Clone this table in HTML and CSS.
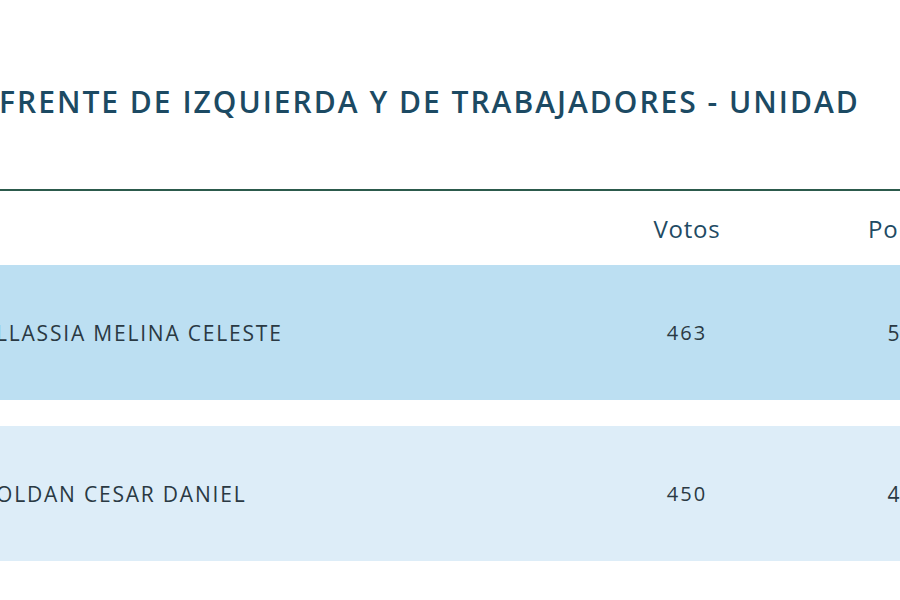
FILE: index.html
```html
<!DOCTYPE html>
<html lang="es">
<head>
<meta charset="utf-8">
<title>Resultados</title>
<link rel="stylesheet" href="styles.css">
</head>
<body>
<main class="page">
  <h2 class="party">FRENTE DE IZQUIERDA Y DE TRABAJADORES - UNIDAD</h2>
  <div class="results">
    <div class="row head">
      <div class="cell name"></div>
      <div class="cell num">Votos</div>
      <div class="cell spacer"></div>
      <div class="cell pct">Porcentaje</div>
    </div>
    <div class="row first">
      <div class="cell name">LLASSIA MELINA CELESTE</div>
      <div class="cell num">463</div>
      <div class="cell spacer"></div>
      <div class="cell pct">50,71 %</div>
    </div>
    <div class="row second">
      <div class="cell name">OLDAN CESAR DANIEL</div>
      <div class="cell num">450</div>
      <div class="cell spacer"></div>
      <div class="cell pct">49,29 %</div>
    </div>
  </div>
</main>
</body>
</html>
```
FILE: styles.css
```css
html, body {
  margin: 0;
  padding: 0;
  background: #ffffff;
  overflow: hidden;
}
body {
  width: 900px;
  height: 600px;
  font-family: "Open Sans", "Noto Sans", sans-serif;
}
.page {
  padding-top: 84px;
  margin-left: -1px;
  width: 1000px;
}
.party {
  margin: 0;
  font-size: 30px;
  line-height: 35px;
  font-weight: 600;
  letter-spacing: 2px;
  color: #1c4a63;
  white-space: nowrap;
}
.results {
  margin-top: 70px;
  border-top: 2px solid #2c5a4c;
}
.row {
  display: grid;
  grid-template-columns: 618px 140px 102px 146px;
  align-items: center;
}
.num, .pct {
  text-align: center;
  white-space: nowrap;
}
.head {
  height: 74px;
  font-size: 24px;
  font-weight: 500;
  letter-spacing: 0.8px;
  color: #1f4b63;
}
.first {
  height: 135px;
  background: #bcdff2;
}
.second {
  height: 135px;
  margin-top: 26px;
  background: #ddedf8;
}
.first, .second {
  font-size: 21px;
  color: #2a3943;
  letter-spacing: 1.8px;
}
.first .num, .second .num {
  font-size: 20px;
  letter-spacing: 2px;
}
.name {
  margin-left: -3px;
  white-space: nowrap;
}
```
